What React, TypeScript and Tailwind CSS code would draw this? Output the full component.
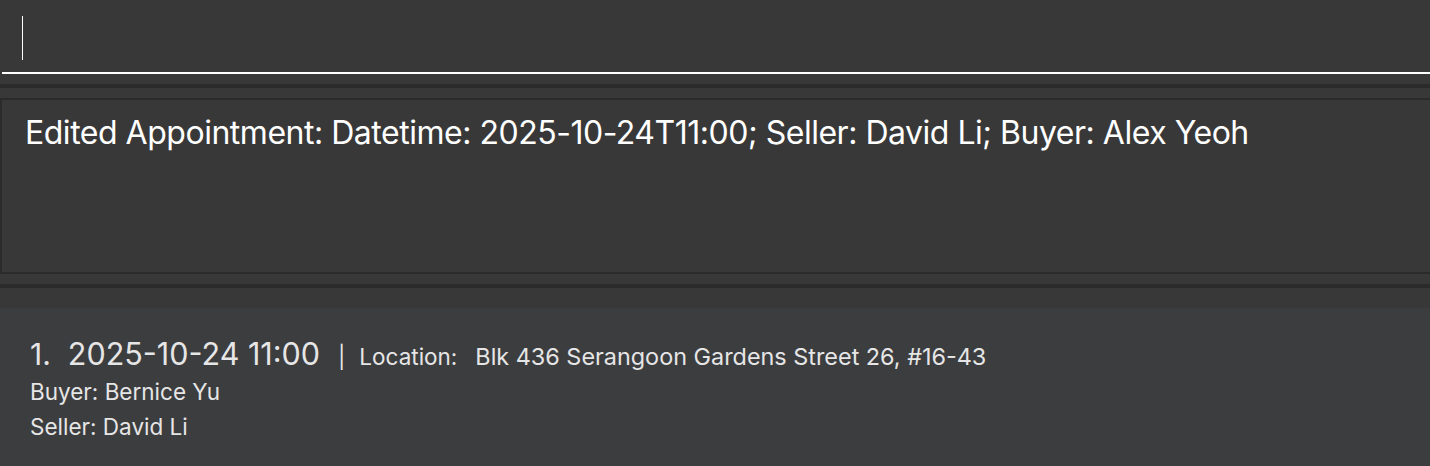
export default function App() {
  return (
    <div className="h-[466px] w-[1430px] overflow-hidden bg-[#383838] font-['Inter',sans-serif]">
      {/* command box */}
      <div className="h-[84px] pl-[2px] pt-[16px]">
        <div className="h-[58px] border-b-2 border-white pl-[20px]">
          <div className="h-[44px] w-px bg-white" />
        </div>
      </div>
      <div className="h-[4px] bg-[#2b2b2b]" />
      <div className="h-[10px]" />
      {/* result display */}
      <div className="h-[176px] border-y-2 border-l-2 border-[#2b2b2b] px-[23px] pt-[13px]">
        <p className="text-[32px] leading-[40px] tracking-[-0.015em] text-white">
          Edited Appointment: Datetime: 2025-10-24T11:00; Seller: David Li; Buyer: Alex Yeoh
        </p>
      </div>
      <div className="h-[10px]" />
      <div className="h-[4px] bg-[#2b2b2b]" />
      <div className="h-[20px]" />
      {/* list */}
      <div className="h-[158px] bg-[#3c3d3f] px-[30px] pt-[26px] text-[#e6e6e6]">
        <div className="flex items-baseline">
          <span className="text-[30px] leading-[40px]">1.</span>
          <span className="ml-[17px] text-[30.5px] leading-[40px]">2025-10-24 11:00</span>
          <span className="ml-[18px] text-[22px]">|</span>
          <span className="ml-[14px] text-[22.5px]">Location:</span>
          <span className="ml-[18px] text-[23.4px]">Blk 436 Serangoon Gardens Street 26, #16-43</span>
        </div>
        <div className="text-[22.5px] leading-[35px]">Buyer: Bernice Yu</div>
        <div className="text-[22.5px] leading-[35px]">Seller: David Li</div>
      </div>
    </div>
  );
}
